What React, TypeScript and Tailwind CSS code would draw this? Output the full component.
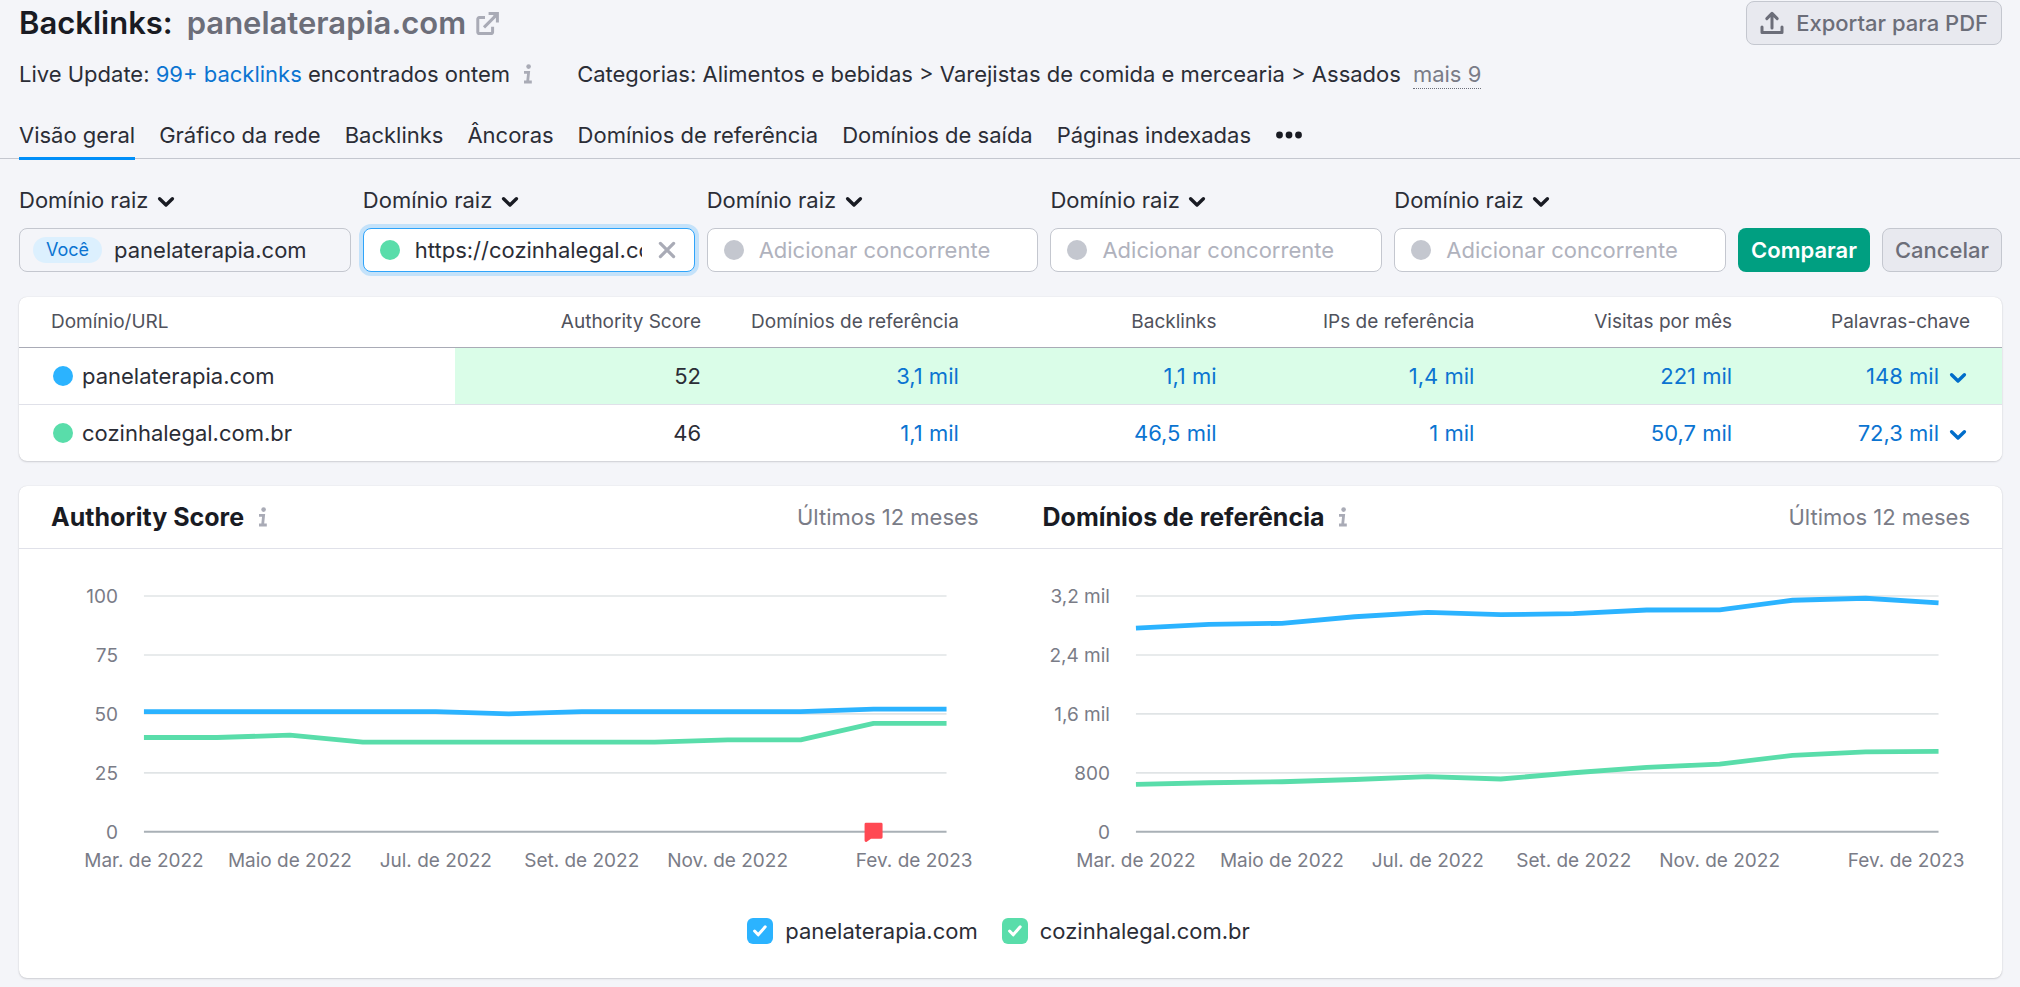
import { useState } from "react";

const BLUE = "#2bb3ff";
const GREEN = "#59ddaa";

function Info() {
  return (
    <button type="button" aria-label="Mais informações" className="flex h-7 items-center">
      <svg width="10" height="20" viewBox="0 0 10 20" aria-hidden="true">
        <circle cx="5.6" cy="2.6" r="2.3" fill="#a9abb6" />
        <path d="M1 8.3h4.6L4.6 18M1 18h7.8" fill="none" stroke="#a9abb6" strokeWidth="2.8" />
      </svg>
    </button>
  );
}

function Chevron({ color = "#191b23" }: { color?: string }) {
  return (
    <svg width="18" height="12" viewBox="0 0 18 12" aria-hidden="true">
      <path d="M2.6 2.8 9 9l6.4-6.2" fill="none" stroke={color} strokeWidth="3.4" strokeLinecap="round" strokeLinejoin="round" />
    </svg>
  );
}

const tabs = [
  "Visão geral",
  "Gráfico da rede",
  "Backlinks",
  "Âncoras",
  "Domínios de referência",
  "Domínios de saída",
  "Páginas indexadas",
];

function Header() {
  return (
    <header>
      <div className="flex h-11 items-center justify-between pr-[18px] pl-[19px]">
        <h1 className="flex items-center text-[31px] leading-10 font-semibold text-[#191b23]">
          <span>Backlinks:</span>
          <span className="ml-[14px] text-[#6c6e79]">panelaterapia.com</span>
          <a href="#site" aria-label="Abrir site" className="ml-[10px]">
            <svg width="23" height="24" viewBox="0 0 23 24" fill="none" stroke="#a9abb6" strokeWidth="3" aria-hidden="true">
              <path d="M9 6.6H3.2a1.4 1.4 0 0 0-1.4 1.4v13.2a1.4 1.4 0 0 0 1.4 1.4h12a1.4 1.4 0 0 0 1.4-1.4v-5.4" />
              <path d="M8 16.4 20 4.4" />
              <path d="M12.6 2.4h8.8v9" />
              <path d="M15.5 2.4h5.9v6Z" fill="#a9abb6" stroke="none" />
            </svg>
          </a>
        </h1>
        <button type="button" className="flex h-11 items-center gap-3 rounded-lg border border-[#c4c7cf] bg-[#e8e9ef] px-[13px] font-medium text-[#6c6e79]">
          <svg width="24" height="24" viewBox="0 0 24 24" fill="none" stroke="#6c6e79" strokeWidth="3" strokeLinecap="round" strokeLinejoin="round" aria-hidden="true">
            <path d="M12 17V3.4M6.8 7.6 12 2.4l5.2 5.2" />
            <path d="M2 16v5.4h20V16" />
          </svg>
          Exportar para PDF
        </button>
      </div>

      <div className="mt-[15px] flex px-[19px]">
        <p>
          Live Update: <a href="#live" className="text-[#0b74d1]">99+ backlinks</a> encontrados ontem
        </p>
        <span className="ml-[13px]">
          <Info />
        </span>
        <p className="ml-11">Categorias: Alimentos e bebidas &gt; Varejistas de comida e mercearia &gt; Assados</p>
        <button type="button" className="ml-3 border-b border-dotted border-[#6c6e79] text-[#7a7c87]">mais 9</button>
      </div>

      <nav className="mt-8 flex gap-6 border-b border-[#c4c7cf] px-[19px]">
        {tabs.map((tab, i) => (
          <a
            key={tab}
            href={"#" + i}
            className={
              i === 0
                ? "-mb-0.5 border-b-3 border-[#008ff8] pb-2"
                : "-mb-0.5 border-b-3 border-transparent pb-2"
            }
          >
            {tab}
          </a>
        ))}
        <button type="button" aria-label="Mais seções" className="flex h-7 items-center">
          <svg width="28" height="8" viewBox="0 0 28 8" fill="#191b23" aria-hidden="true">
            <circle cx="4.5" cy="4" r="3.4" />
            <circle cx="14" cy="4" r="3.4" />
            <circle cx="23.5" cy="4" r="3.4" />
          </svg>
        </button>
      </nav>
    </header>
  );
}

function ScopeSelect({ index }: { index: number }) {
  return (
    <div className="grid w-max items-center">
      <select
        aria-label={"Escopo " + (index + 1)}
        className="col-start-1 row-start-1 h-7 appearance-none bg-transparent pr-7 outline-none"
      >
        <option>Domínio raiz</option>
      </select>
      <span className="pointer-events-none col-start-1 row-start-1 mt-1 justify-self-end pr-0.5">
        <Chevron />
      </span>
    </div>
  );
}

function CompareForm() {
  const [rival, setRival] = useState("https://cozinhalegal.com.br");
  return (
    <form className="mt-[27px] flex items-end gap-3" onSubmit={(e) => e.preventDefault()}>
      <div className="min-w-0 flex-1">
        <ScopeSelect index={0} />
        <div className="mt-[14px] flex h-11 items-center gap-3 rounded-lg border border-[#c4c7cf] px-[13px]">
          <span className="rounded-full bg-[#dcf0fe] px-[13px] text-lg leading-[26px] text-[#0b74d1]">Você</span>
          <input aria-label="Seu domínio" readOnly value="panelaterapia.com" className="min-w-0 flex-1 bg-transparent outline-none" />
        </div>
      </div>

      <div className="min-w-0 flex-1">
        <ScopeSelect index={1} />
        <div className="mt-[14px] flex h-11 items-center rounded-lg border border-[#2fa4fa] bg-white px-4 ring-4 ring-[#c4e2fa]">
          <span className="size-5 shrink-0 rounded-full bg-[#59ddaa]" />
          <input
            aria-label="Concorrente 1"
            value={rival}
            onChange={(e) => setRival(e.target.value)}
            className="ml-[15px] min-w-0 flex-1 bg-transparent outline-none"
          />
          <button type="button" aria-label="Limpar" onClick={() => setRival("")} className="mr-0.5 ml-4">
            <svg width="18" height="18" viewBox="0 0 18 18" aria-hidden="true">
              <path d="m2.4 2.4 13.2 13.2M15.6 2.4 2.4 15.6" stroke="#a9abb6" strokeWidth="3.2" strokeLinecap="round" />
            </svg>
          </button>
        </div>
      </div>

      {[2, 3, 4].map((n) => (
        <div key={n} className="min-w-0 flex-1">
          <ScopeSelect index={n} />
          <div className="mt-[14px] flex h-11 items-center rounded-lg border border-[#c4c7cf] bg-white px-4">
            <span className="size-5 shrink-0 rounded-full bg-[#c4c7cf]" />
            <input
              aria-label={"Concorrente " + n}
              placeholder="Adicionar concorrente"
              className="ml-[15px] min-w-0 flex-1 bg-transparent outline-none placeholder:text-[#b0b2bd]"
            />
          </div>
        </div>
      ))}

      <button type="submit" className="h-11 rounded-lg bg-[#009f81] px-[13px] font-semibold text-white">Comparar</button>
      <button type="button" className="h-11 rounded-lg border border-[#c4c7cf] bg-[#e8e9ef] px-3 font-medium text-[#6c6e79]">Cancelar</button>
    </form>
  );
}

const columns = ["Authority Score", "Domínios de referência", "Backlinks", "IPs de referência", "Visitas por mês"];
const rows = [
  { domain: "panelaterapia.com", dot: "bg-[#2bb3ff]", bg: "bg-[#dafde8]", cells: ["52", "3,1 mil", "1,1 mi", "1,4 mil", "221 mil"], keywords: "148 mil" },
  { domain: "cozinhalegal.com.br", dot: "bg-[#59ddaa]", bg: "bg-white", cells: ["46", "1,1 mil", "46,5 mil", "1 mil", "50,7 mil"], keywords: "72,3 mil" },
];

function Metrics() {
  return (
    <section className="mt-[25px] overflow-hidden rounded-lg bg-white shadow-[0_0_1px_rgba(25,27,35,0.16),0_1px_2px_rgba(25,27,35,0.16)]">
      <table className="w-full table-fixed border-collapse text-right">
        <colgroup>
          <col className="w-[22%]" />
          <col className="w-[13%]" />
          <col className="w-[13%]" />
          <col className="w-[13%]" />
          <col className="w-[13%]" />
          <col className="w-[13%]" />
          <col className="w-[13%]" />
        </colgroup>
        <thead className="border-b border-[#a9abb6] text-[19px] text-[#50525c]">
          <tr className="h-[50px]">
            <th scope="col" className="pl-8 text-left font-normal">Domínio/URL</th>
            {columns.map((c) => (
              <th key={c} scope="col" className="pr-3 font-normal">{c}</th>
            ))}
            <th scope="col" className="pr-8 font-normal">Palavras-chave</th>
          </tr>
        </thead>
        <tbody>
          {rows.map((r) => (
            <tr key={r.domain} className="h-[57px] border-b border-[#e0e1e9] last:border-b-0">
              <th scope="row" className="pl-[34px] text-left font-normal">
                <span className="flex items-center gap-[9px]">
                  <span className={"size-5 rounded-full " + r.dot} />
                  {r.domain}
                </span>
              </th>
              {r.cells.map((c, i) => (
                <td key={i} className={"pr-3 " + r.bg}>
                  {i === 0 ? c : <a href="#relatorio" className="text-[#0b74d1]">{c}</a>}
                </td>
              ))}
              <td className={"pr-[35px] " + r.bg}>
                <button type="button" className="inline-flex items-center gap-[10px] text-[#0b74d1]">
                  {r.keywords}
                  <span className="mt-1">
                    <Chevron color="#006dca" />
                  </span>
                </button>
              </td>
            </tr>
          ))}
        </tbody>
      </table>
    </section>
  );
}

const LEFT = 125;
const RIGHT = 928;
const TOP = 47;
const BOTTOM = 283;
const STEP = (RIGHT - LEFT) / 11;
const months = ["Mar. de 2022", "Maio de 2022", "Jul. de 2022", "Set. de 2022", "Nov. de 2022"];

type Series = { color: string; values: number[] };

function Chart({ title, max, ticks, series, flag }: { title: string; max: number; ticks: string[]; series: Series[]; flag?: number }) {
  const points = (values: number[]) =>
    values.map((v, i) => `${LEFT + i * STEP},${BOTTOM - (v / max) * (BOTTOM - TOP)}`).join(" ");
  return (
    <article className="min-w-0 flex-1">
      <div className="flex h-[63px] items-center border-b border-[#e0e1e9] px-8">
        <h2 className="text-[25px] leading-8 font-bold text-[#191b23]">{title}</h2>
        <span className="ml-[14px]">
          <Info />
        </span>
        <span className="ml-auto text-[#7a7c87]">Últimos 12 meses</span>
      </div>
      <svg viewBox="0 0 992 340" className="block w-full" role="img" aria-label={title}>
        {ticks.map((t, i) => {
          const y = TOP + ((BOTTOM - TOP) * i) / 4;
          return (
            <g key={t}>
              <line x1={LEFT} x2={RIGHT} y1={y} y2={y} stroke={i === 4 ? "#a9b0b6" : "#e0e4e6"} strokeWidth={i === 4 ? 2 : 1.6} />
              <text x={LEFT - 26} y={Math.round(y) + 7} textAnchor="end" fontSize="19" fill="#7a7c87">{t}</text>
            </g>
          );
        })}
        {months.map((m, i) => (
          <text key={m} x={LEFT + i * 2 * STEP} y={318} textAnchor="middle" fontSize="19" fill="#7a7c87">{m}</text>
        ))}
        <text x={RIGHT + 26} y={318} textAnchor="end" fontSize="19" fill="#7a7c87">Fev. de 2023</text>
        {series.map((s) => (
          <polyline key={s.color} points={points(s.values)} fill="none" stroke={s.color} strokeWidth="4.8" strokeLinejoin="round" />
        ))}
        {flag !== undefined && (
          <path
            transform={`translate(${LEFT + flag * STEP - 9} 274)`}
            d="M1.4 0h15.2a1.4 1.4 0 0 1 1.4 1.4v13a1.4 1.4 0 0 1-1.4 1.4H6.4L2.2 18.8A1.4 1.4 0 0 1 0 17.7V1.4A1.4 1.4 0 0 1 1.4 0Z"
            fill="#ff4953"
          />
        )}
      </svg>
    </article>
  );
}

function LegendItem({ label, box, on, toggle }: { label: string; box: string; on: boolean; toggle: () => void }) {
  return (
    <label className="flex items-center gap-3">
      <span className="grid place-items-center">
        <input type="checkbox" checked={on} onChange={toggle} className={"col-start-1 row-start-1 size-[26px] appearance-none rounded-md " + box} />
        {on && (
          <svg width="16" height="14" viewBox="0 0 16 14" className="pointer-events-none col-start-1 row-start-1" aria-hidden="true">
            <path d="m2.6 7 3.6 3.8 7-8" fill="none" stroke="#fff" strokeWidth="3" strokeLinecap="round" strokeLinejoin="round" />
          </svg>
        )}
      </span>
      {label}
    </label>
  );
}

const authority = {
  own: [51, 51, 51, 51, 51, 50, 51, 51, 51, 51, 52, 52],
  rival: [40, 40, 41, 38, 38, 38, 38, 38, 39, 39, 46, 46],
};
const referring = {
  own: [2765, 2815, 2829, 2918, 2978, 2947, 2960, 3010, 3012, 3142, 3169, 3105],
  rival: [643, 666, 680, 710, 748, 717, 802, 874, 920, 1038, 1084, 1092],
};

function Trends() {
  const [own, setOwn] = useState(true);
  const [rival, setRival] = useState(true);
  const pick = (d: { own: number[]; rival: number[] }): Series[] => [
    ...(own ? [{ color: BLUE, values: d.own }] : []),
    ...(rival ? [{ color: GREEN, values: d.rival }] : []),
  ];
  return (
    <section className="mt-[25px] rounded-lg bg-white pb-[33px] shadow-[0_0_1px_rgba(25,27,35,0.16),0_1px_2px_rgba(25,27,35,0.16)]">
      <div className="flex">
        <Chart title="Authority Score" max={100} ticks={["100", "75", "50", "25", "0"]} series={pick(authority)} flag={10} />
        <Chart title="Domínios de referência" max={3200} ticks={["3,2 mil", "2,4 mil", "1,6 mil", "800", "0"]} series={pick(referring)} />
      </div>
      <div className="mt-7 flex justify-center gap-6 pr-6">
        <LegendItem label="panelaterapia.com" box="bg-[#2bb3ff]" on={own} toggle={() => setOwn(!own)} />
        <LegendItem label="cozinhalegal.com.br" box="bg-[#59ddaa]" on={rival} toggle={() => setRival(!rival)} />
      </div>
    </section>
  );
}

export default function App() {
  return (
    <div className="min-h-screen bg-[#f4f5f9] pt-px pb-2 font-[Inter,sans-serif] text-[22px] leading-7 text-[#2b2d36]">
      <Header />
      <main className="pr-[18px] pl-[19px]">
        <CompareForm />
        <Metrics />
        <Trends />
      </main>
    </div>
  );
}
